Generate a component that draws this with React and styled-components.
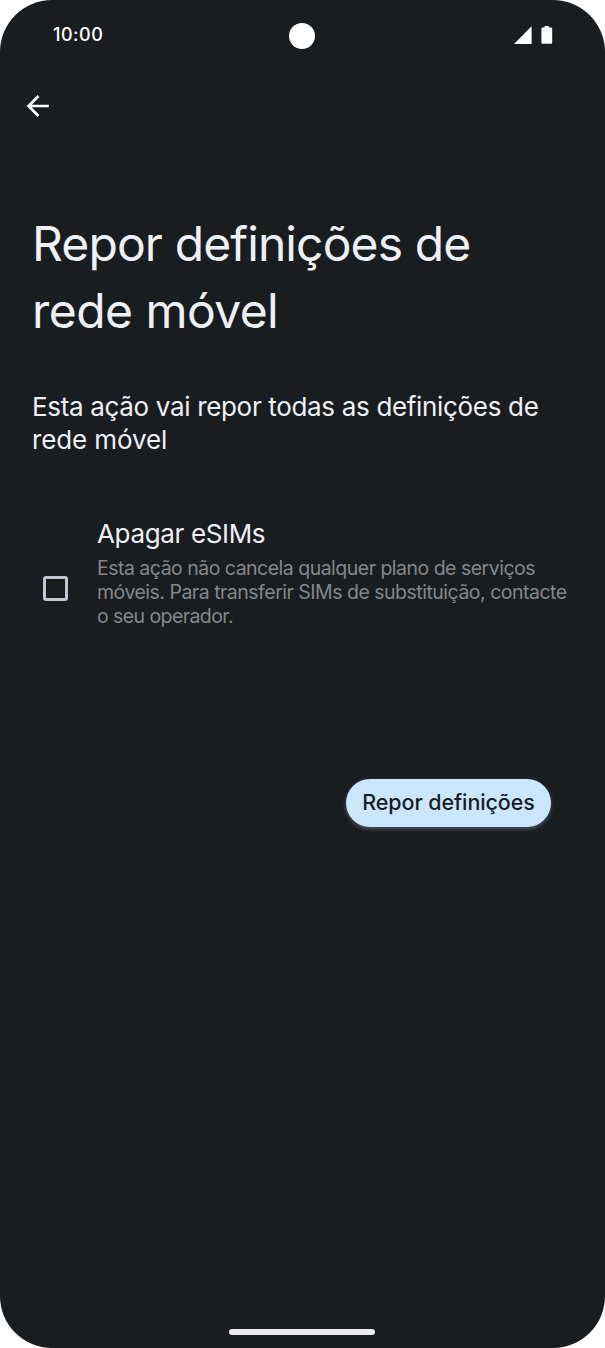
import React, { useState } from 'react';
import styled, { createGlobalStyle } from 'styled-components';

const GlobalStyle = createGlobalStyle`
    * { box-sizing:border-box; }

    body {
        margin:0;
        background-color:#fff;
        font-family:Inter, "Liberation Sans", sans-serif;
    }
`

const Screen = styled.div`
    display:flex;
    flex-direction:column;
    width:605px;
    height:1348px;
    border-radius:52px;
    background-color:#1a1d1f;
    color:#eef0f8;
    overflow:hidden;
`

const StatusBar = styled.header`
    display:grid;
    grid-template-columns:1fr 26px 1fr;
    align-items:center;
    height:72px;
    padding:0 52px 0 53px;
    color:#fff;
`

const Camera = styled.span`
    width:26px;
    height:26px;
    margin-left:-1px;
    border-radius:50%;
    background-color:#fff;
`

const StatusIcons = styled.div`
    display:flex;
    justify-content:flex-end;
    gap:9px;
    margin-top:-3px;
`

const Toolbar = styled.nav`
    display:flex;
    align-items:center;
    height:67px;
    padding-left:26px;
`

const BackButton = styled.button`
    display:flex;
    padding:0;
    border:0;
    background:none;
    color:#fff;
`

const Line = styled.span`
    display:block;
    width:max-content;
    white-space:nowrap;
    letter-spacing:${props => props.$spacing || 0}px;
`

const Time = styled(Line)`
    margin-top:-4px;
    font-size:18px;
    font-weight:500;
`

const Content = styled.main`
    display:flex;
    flex-direction:column;
    flex:1;
    padding:71px 32px 0;
`

const Title = styled.h1`
    margin:0;
    font-size:48px;
    font-weight:400;
    line-height:67px;
`

const Message = styled.p`
    margin:46px 0 0;
    font-size:26px;
    line-height:33px;
`

const Option = styled.label`
    display:flex;
    align-items:center;
    gap:29px;
    margin-top:59px;
    padding-left:11px;
`

const CheckBox = styled.input`
    appearance:none;
    flex:none;
    width:25px;
    height:25px;
    margin:33px 0 0;
    border:3px solid #c3c5d0;
    border-radius:3px;

    &:checked {
        background-color:#c3c5d0;
    }
`

const OptionTitle = styled.div`
    font-size:26px;
    line-height:38px;
`

const OptionText = styled.div`
    margin-top:3px;
    color:#84868b;
    font-size:19.5px;
    line-height:24.2px;
`

const ResetButton = styled.button`
    display:flex;
    align-items:center;
    justify-content:center;
    align-self:flex-end;
    width:205px;
    height:48px;
    margin:150px 22px 0 0;
    padding:0 0 1px;
    border:0;
    border-radius:24px;
    background-color:#cbe6ff;
    box-shadow:0 2px 4px rgba(203, 230, 255, .28);
    color:#1a1d1f;
    font-family:inherit;
    font-size:21.5px;
    font-weight:450;
`

const HomeBar = styled.div`
    align-self:center;
    width:146px;
    height:6px;
    margin:0 1px 13px 0;
    border-radius:3px;
    background-color:#eeecf2;
`

function SignalIcon() {
    return (
        <svg width="18" height="18" viewBox="0 0 18 18" fill="currentColor">
            <path d="M0 18 17.6 .3V18Z" />
        </svg>
    )
}

function BatteryIcon() {
    return (
        <svg width="12" height="18" viewBox="0 0 12 18" fill="currentColor">
            <path d="M3.6 0h4.2v1.6H10a1.2 1.2 0 0 1 1.2 1.2v13.8a1.2 1.2 0 0 1-1.2 1.2H1.6A1.2 1.2 0 0 1 .4 16.6V2.8a1.2 1.2 0 0 1 1.2-1.2h2Z" />
        </svg>
    )
}

function BackIcon() {
    return (
        <svg width="24" height="24" viewBox="0 0 24 24" fill="none" stroke="currentColor" strokeWidth="2.7">
            <path d="M22.8 12H3M12.5 2 2.5 12l10 10" />
        </svg>
    )
}

function App() {

    const [eraseSims, setEraseSims] = useState(false);

    return (
        <>
            <GlobalStyle />
            <Screen>
                <StatusBar>
                    <Time $spacing={.5}>10:00</Time>
                    <Camera />
                    <StatusIcons>
                        <SignalIcon />
                        <BatteryIcon />
                    </StatusIcons>
                </StatusBar>
                <Toolbar>
                    <BackButton aria-label="Voltar"><BackIcon /></BackButton>
                </Toolbar>
                <Content>
                    <Title>
                        <Line $spacing={-.88}>Repor definições de</Line>
                        <Line $spacing={-.55}>rede móvel</Line>
                    </Title>
                    <Message>
                        <Line $spacing={-.33}>Esta ação vai repor todas as definições de</Line>
                        <Line $spacing={-.12}>rede móvel</Line>
                    </Message>
                    <Option>
                        <CheckBox type="checkbox" checked={eraseSims} onChange={e => setEraseSims(e.target.checked)} />
                        <div>
                            <OptionTitle><Line $spacing={-.35}>Apagar eSIMs</Line></OptionTitle>
                            <OptionText>
                                <Line $spacing={-.51}>Esta ação não cancela qualquer plano de serviços</Line>
                                <Line $spacing={-.5}>móveis. Para transferir SIMs de substituição, contacte</Line>
                                <Line $spacing={-.57}>o seu operador.</Line>
                            </OptionText>
                        </div>
                    </Option>
                    <ResetButton type="button"><Line $spacing={-.1}>Repor definições</Line></ResetButton>
                </Content>
                <HomeBar />
            </Screen>
        </>
    )
}

export default App;
